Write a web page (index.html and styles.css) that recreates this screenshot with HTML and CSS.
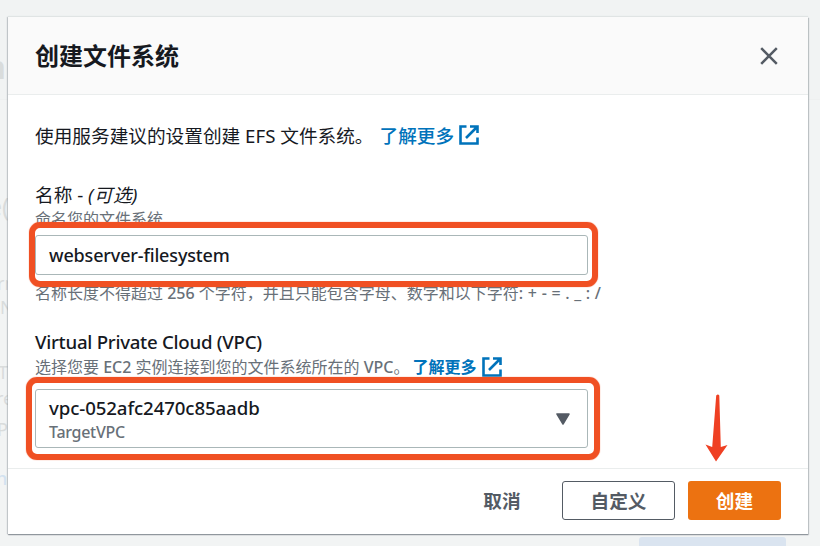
FILE: index.html
```html
<!DOCTYPE html>
<html lang="zh-CN">
<head>
<meta charset="utf-8">
<title>创建文件系统</title>
<link rel="stylesheet" href="styles.css">
</head>
<body>
<div class="backdrop" aria-hidden="true">
  <div class="page-band"></div>
  <span class="ghost g1">n</span>
  <span class="ghost g2">e(</span>
  <span class="ghost g3">rn</span>
  <span class="ghost g4">N</span>
  <span class="ghost g5">T</span>
  <span class="ghost g6">re</span>
  <span class="ghost g7">P</span>
  <span class="ghost g8">n</span>
  <div class="page-block"></div>
</div>
<section class="modal" role="dialog">
  <header class="modal-header">
    <h1>创建文件系统</h1>
    <button class="close" aria-label="关闭"><svg width="20" height="20" viewBox="0 0 20 20"><path d="M2.2 2.2 17.8 17.8M17.8 2.2 2.2 17.8"/></svg></button>
  </header>
  <main class="modal-body">
    <p class="intro"><span>使用服务建议的设置创建 <span class="efs">EFS</span> 文件系统。</span><a class="link">了解更多<svg width="20" height="20" viewBox="0 0 20 20"><path d="M7.5 1.5H1.5v17h17V12.5M11 1.5h7.5V8M18 2 7 13"/></svg></a></p>
    <div class="field name-field">
      <label class="label">名称 - <i>(可选)</i></label>
      <div class="hint">命名您的文件系统</div>
      <div class="input"><span class="input-text">webserver-filesystem</span><div class="mark"></div></div>
      <div class="hint rule">名称长度不得超过 <span class="num">256</span> 个字符，并且只能包含字母、数字和以下字符<span class="symbols">: + - = . _ : /</span></div>
    </div>
    <div class="field vpc-field">
      <label class="label"><span class="vpc-label">Virtual Private Cloud (VPC)</span></label>
      <div class="hint row"><span>选择您要 <span class="ec2">EC2</span> 实例连接到您的文件系统所在的 <span class="vpc">VPC</span>。</span><a class="link bold">了解更多<svg width="20" height="20" viewBox="0 0 20 20"><path d="M7.5 1.5H1.5v17h17V12.5M11 1.5h7.5V8M18 2 7 13"/></svg></a></div>
      <div class="select">
        <div><div class="value">vpc-052afc2470c85aadb</div><div class="detail">TargetVPC</div></div>
        <svg class="caret" width="14" height="12" viewBox="0 0 14 12"><path d="M1 1h12L7 11z"/></svg>
        <div class="mark"></div>
      </div>
    </div>
  </main>
  <footer class="modal-footer">
    <button class="btn plain">取消</button>
    <button class="btn outline">自定义</button>
    <button class="btn primary">创建</button>
    <svg class="arrow" width="24" height="70" viewBox="0 0 24 70"><path d="M11.2 2.5Q13 .5 14.3 2.5L15.8 54 22.5 52 11 68.5.5 51.5 7.2 54z"/></svg>
  </footer>
</section>
</body>
</html>
```
FILE: styles.css
```css
* { box-sizing: border-box; }
body {
  margin: 0;
  width: 820px;
  height: 546px;
  padding: 17px 12px 12px 8px;
  overflow: hidden;
  position: relative;
  background: #f2f4f4;
  color: #16191f;
  font-family: "Noto Sans", "Noto Sans CJK SC", sans-serif;
  font-size: 18.67px;
}
h1, p { margin: 0; }
button { font: inherit; padding: 0; border: 0; background: none; }
.backdrop { position: absolute; inset: 0; overflow: hidden; }
.page-band { height: 100px; background: #f1f3f3; border-bottom: 1px solid #eef0f0; }
.page-block { position: absolute; left: 639px; top: 537px; width: 147px; height: 20px; border-radius: 3px; background: #dae4f0; }
.ghost { position: absolute; left: 0; color: #d9dcdc; font-size: 18px; line-height: 24px; white-space: nowrap; }
.g1 { top: 49px; left: -15px; font-size: 33px; line-height: 36px; font-weight: 600; }
.g2 { top: 189px; left: -12px; font-size: 25px; line-height: 34px; }
.g3 { top: 271px; left: -3px; }
.g4 { top: 295px; }
.g5 { top: 360px; left: -2px; }
.g6 { top: 386px; left: -4px; }
.g7 { top: 417px; left: -3px; }
.g8 { top: 466px; left: -4px; font-weight: 500; color: #d2e2f0; }
.modal {
  position: relative;
  width: 800px;
  height: 517px;
  display: flex;
  flex-direction: column;
  background: #fff;
  box-shadow: 0 1px 1px #6870788c, 1px 1px 1px #6870784d, 0 -1px 1px #e0e4e4, -1px 0 1px #6870784d;
}
.modal-header {
  height: 78px;
  padding: 0 29px 0 27px;
  display: flex;
  align-items: center;
  justify-content: space-between;
  background: #fafafa;
  border-bottom: 1px solid #eaeded;
}
h1 { font-size: 24px; line-height: 36px; font-weight: 700; }
.close { width: 20px; height: 20px; }
.close svg { display: block; fill: none; stroke: #545b64; stroke-width: 2.5; }
.modal-body { flex: 1; padding: 25px 0 0 27px; white-space: nowrap; }
.intro { display: flex; align-items: center; height: 28px; }
.link { display: flex; align-items: center; gap: 5px; margin-left: 6px; color: #0073bb; font-weight: 500; }
.link svg { fill: none; stroke: #0073bb; stroke-width: 2.6; }
.intro .link svg { position: relative; top: 1px; }
.bold { margin-left: 3px; font-weight: 700; }
.label { display: block; height: 24px; line-height: 24px; }
.label i { font-style: italic; letter-spacing: .4px; }
.hint { height: 24px; line-height: 24px; font-size: 16px; color: #687078; }
.num, .ec2, .vpc { font-weight: 500; }
.symbols { font-weight: 500; letter-spacing: .25px; }
.row { display: flex; align-items: center; }
.name-field { margin-top: 35px; }
.vpc-field { margin-top: 26px; }
.input, .select { position: relative; width: 553px; border: 1px solid #aab7b8; border-radius: 3px; background: #fff; padding: 0 13px; display: flex; align-items: center; }
.input { height: 40px; margin-top: 4px; font-size: 18px; font-weight: 500; letter-spacing: -.15px; }
.rule { margin-top: 6px; }
.vpc-field .label { line-height: 22px; }
.select { height: 59px; margin-top: 10px; padding-right: 17px; justify-content: space-between; }
.value { height: 24px; line-height: 26px; font-weight: 500; letter-spacing: -.1px; }
.detail { height: 24px; line-height: 26px; font-size: 16px; font-weight: 500; letter-spacing: -.3px; color: #687078; }
.caret { fill: #545b64; stroke: #545b64; stroke-width: 1.5; stroke-linejoin: round; }
.mark { position: absolute; border: 6px solid #f05023; border-radius: 11px; box-shadow: 0 0 1px #f05023; }
.input .mark { inset: -14px -11px -13px -7px; }
.select .mark { inset: -13px -13px -13px -10px; }
.vpc-label { font-weight: 500; letter-spacing: -.27px; }
.modal-footer {
  position: relative;
  height: 66px;
  padding: 0 27px 3px 0;
  display: flex;
  align-items: center;
  justify-content: flex-end;
  gap: 13px;
  border-top: 1px solid #eaeded;
}
.btn { height: 39px; padding-bottom: 2px; border-radius: 3px; font-weight: 700; color: #545b64; }
.plain { width: 94px; }
.outline { width: 113px; border: 1px solid #545b64; }
.primary { width: 93px; background: #ec7211; color: #fff; }
.arrow { position: absolute; left: 697px; top: -76px; fill: #ef4023; }
```
